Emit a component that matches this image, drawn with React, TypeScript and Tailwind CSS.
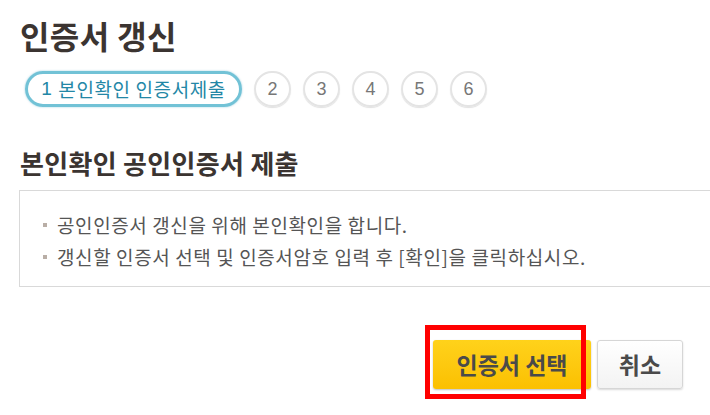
import React from 'react';

const font = { fontFamily: '"Noto Sans CJK KR", "Noto Sans", sans-serif' };

const steps = [2, 3, 4, 5, 6];

const notes = [
  '공인인증서 갱신을 위해 본인확인을 합니다.',
  '갱신할 인증서 선택 및 인증서암호 입력 후 [확인]을 클릭하십시오.',
];

export default function App() {
  return (
    <div
      className="w-[710px] h-[415px] overflow-hidden bg-white pl-[20px] text-[#3b3431]"
      style={font}
    >
      {/* Title */}
      <h1 className="mt-[17px] h-[36px] text-[32px] leading-[36px] font-bold tracking-[0.4px]">인증서 갱신</h1>

      {/* Steps */}
      <div className="mt-[18px] flex items-center gap-[12px] pl-[5px]">
        <div className="h-[36px] w-[217px] rounded-full border-[3px] border-[#72c2d6] shadow-[0_0_2px_rgba(80,170,200,0.6)] flex items-center justify-center text-[19px] leading-[30px] tracking-[0.6px] text-[#2387a6]">
          <span className="font-['Liberation_Sans']">1</span>
          <span className="ml-[6px]">본인확인 인증서제출</span>
        </div>
        {steps.map((n) => (
          <div
            key={n}
            className="w-[37px] h-[36px] rounded-full border-2 border-[#e4e4e4] shadow-[0_1px_1px_rgba(0,0,0,0.12)] flex items-center justify-center text-[18px] text-[#777] font-['Liberation_Sans']"
          >
            {n}
          </div>
        ))}
      </div>

      {/* Section */}
      <h2 className="mt-[41px] h-[30px] text-[26px] leading-[30px] font-bold tracking-[0.3px]">본인확인 공인인증서 제출</h2>

      <div className="mt-[12px] -ml-px w-[720px] h-[97px] border border-[#d9d9d9] pl-[23px] pt-[18px]">
        {notes.map((t, i) => (
          <div key={i} className="flex items-center h-[32px] text-[19px] leading-[32px] tracking-[0.6px] text-[#555]">
            <span className="w-[4px] h-[4px] bg-[#b9aea6] mr-[10px] shrink-0" />
            <span>{t}</span>
          </div>
        ))}
      </div>

      {/* Buttons */}
      <div className="mt-[53px] flex justify-end pr-[27px] gap-[6px]">
        <div className="relative">
          <button className="w-[158px] h-[49px] rounded-[3px] bg-gradient-to-b from-[#ffd21a] to-[#fbc000] shadow-[0_1px_2px_rgba(0,0,0,0.25)] text-[23px] leading-[49px] font-bold text-[#4a4a4a]">
            인증서 선택
          </button>
          <div className="absolute left-[-8px] top-[-15px] w-[161px] h-[74px] border-[5px] border-[#ff0000]" />
        </div>
        <button className="w-[86px] h-[49px] rounded-[3px] border border-[#d6d6d6] bg-gradient-to-b from-white to-[#f3f3f3] shadow-[0_1px_2px_rgba(0,0,0,0.15)] text-[23px] leading-[47px] font-bold text-[#4a4a4a]">
          취소
        </button>
      </div>
    </div>
  );
}
